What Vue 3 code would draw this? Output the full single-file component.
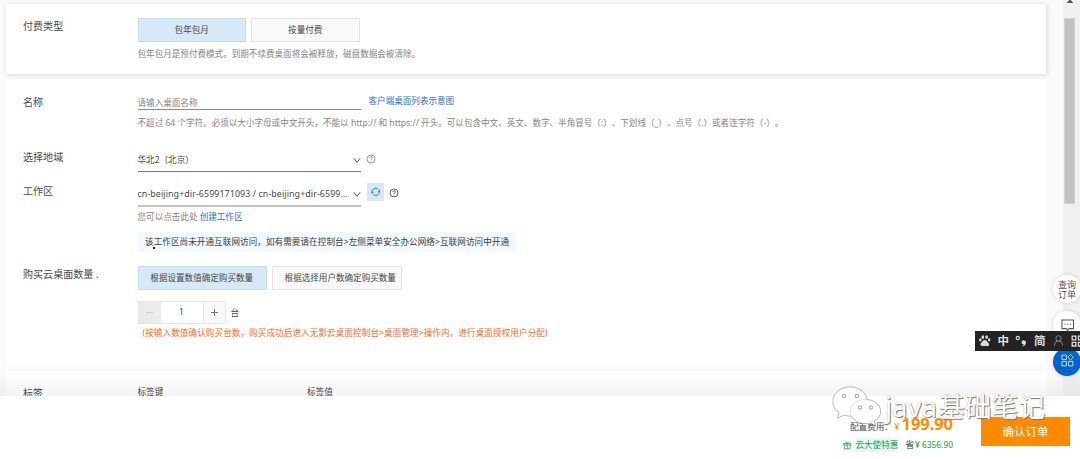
<script setup>
import { ref } from 'vue'

const payTypes = ['包年包月', '按量付费']
const payType = ref(0)
const quantityModes = ['根据设置数值确定购买数量', '根据选择用户数确定购买数量']
const quantityMode = ref(0)
const quantity = ref(1)
</script>

<template>
  <div class="page">
    <main class="content">
      <section class="card pay">
        <div class="label">付费类型</div>
        <div class="field">
          <div class="choices">
            <button v-for="(t, i) in payTypes" :key="t" class="choice" :class="{ active: payType === i }" @click="payType = i">{{ t }}</button>
          </div>
          <p class="hint pay-hint">包年包月是预付费模式。到期不续费桌面将会被释放，磁盘数据会被清除。</p>
        </div>
      </section>

      <section class="card config">
        <div class="row name-row">
          <div class="label">名称</div>
          <div class="field">
            <div class="line">
              <div class="input">请输入桌面名称</div>
              <a class="link">客户端桌面列表示意图</a>
            </div>
            <p class="hint rules">不超过 64 个字符。必须以大小字母或中文开头，不能以 http:// 和 https:// 开头。可以包含中文、英文、数字、半角冒号（:）、下划线（_）、点号（.）或者连字符（-）。</p>
          </div>
        </div>

        <div class="row region-row">
          <div class="label down">选择地域</div>
          <div class="field line">
            <div class="select"><span>华北2（北京）</span>
              <svg class="chevron" viewBox="0 0 9 7"><path d="M1 1l3.5 4.6L8 1" /></svg>
            </div>
            <svg class="help" viewBox="0 0 10 10"><circle cx="5" cy="5" r="4" /><path d="M3.7 4.1c0-1.8 2.7-1.7 2.7-.2 0 1-1.4 1-1.4 2M5 6.8v.8" /></svg>
          </div>
        </div>

        <div class="row zone-row">
          <div class="label">工作区</div>
          <div class="field">
            <div class="line">
              <div class="select busy"><span class="zone">cn-beijing+dir-6599171093 / cn-beijing+dir-6599...</span>
                <svg class="chevron" viewBox="0 0 9 7"><path d="M1 1l3.5 4.6L8 1" /></svg>
              </div>
              <button class="refresh">
                <svg viewBox="0 0 10 10"><path d="M1.3 6A3.8 3.8 0 0 1 7.4 2M2.6 8A3.8 3.8 0 0 0 8.7 4" /><path class="tip" d="M0 5.2h2.7L1.4 7.1zM7.3 4.8H10L8.6 2.9z" /></svg>
              </button>
              <svg class="help dark" viewBox="0 0 10 10"><circle cx="5" cy="5" r="4" /><path d="M3.7 4.1c0-1.8 2.7-1.7 2.7-.2 0 1-1.4 1-1.4 2M5 6.8v.8" /></svg>
            </div>
            <p class="hint zone-hint">您可以点击此处 <a>创建工作区</a></p>
            <p class="notice">该工作区尚未开通互联网访问，如有需要请在控制台&gt;左侧菜单安全办公网络&gt;互联网访问中开通</p>
          </div>
        </div>

        <div class="row">
          <div class="label">购买云桌面数量 .</div>
          <div class="field">
            <div class="choices wide">
              <button v-for="(m, i) in quantityModes" :key="m" class="choice" :class="{ active: quantityMode === i }" @click="quantityMode = i">{{ m }}</button>
            </div>
            <div class="amount">
              <div class="stepper">
                <button class="minus" @click="quantity = Math.max(1, quantity - 1)"></button>
                <span>{{ quantity }}</span>
                <button class="plus" @click="quantity++"></button>
              </div>
              <span class="unit">台</span>
            </div>
            <p class="warn">(按输入数值确认购买台数，购买成功后进入无影云桌面控制台&gt;桌面管理&gt;操作内，进行桌面授权用户分配)</p>
          </div>
        </div>
      </section>

      <section class="card tags">
        <div class="label down">标签</div>
        <div class="tag-cols"><span>标签键</span><span>标签值</span></div>
      </section>

      <div class="scrollbar">
        <svg class="arrow" viewBox="0 0 6 3"><path d="M2 0h2v1h1v1h1v1H0V2h1V1h1z" /></svg>
        <div class="thumb"></div>
      </div>
      <div class="fade"></div>
    </main>

    <footer class="footer">
      <div class="totals">
        <div class="cost"><span class="cost-label">配置费用：</span><span class="yen">¥</span><strong>199.90</strong></div>
        <div class="saving">
          <svg class="gift" viewBox="0 0 9 9"><path d="M.7 2.6h7.6v1.7H.7zM1.4 4.3v4h6.2v-4M4.5 2.6v5.7M4.5 2.5L2.7.6M4.5 2.5L6.3.6" /></svg>
          <span class="promo">云大使特惠</span><span class="save">省</span><span class="saved">¥ 6356.90</span>
        </div>
      </div>
      <button class="submit">确认订单</button>
    </footer>

    <div class="bubble orders"><span>查询</span><span>订单</span></div>
    <div class="bubble chat">
      <svg viewBox="0 0 14 13"><path d="M1 1h12v9H8.4L7 11.8 5.6 10H1zM3.7 5.500h1.200M6.400 5.500h1.200M9.100 5.500h1.200" /></svg>
    </div>
    <div class="bubble apps">
      <svg viewBox="0 0 14 14"><path d="M1 1.2h4.8v4.8H1zM1 8h4.8v4.8H1zM8 8h4.8v4.8H8zM10.3.5l3 3-3 3-3-3z" /></svg>
    </div>

    <div class="ime">
      <svg class="paw" viewBox="0 0 12 12"><ellipse cx="4" cy="2.2" rx="1.4" ry="2" /><ellipse cx="8" cy="2.2" rx="1.4" ry="2" /><ellipse cx="1.4" cy="5" rx="1.3" ry="1.7" /><ellipse cx="10.6" cy="5" rx="1.3" ry="1.7" /><path d="M6 5.1c2 0 2.5 1.9 3.8 3.2 1.7 1.8.2 3.6-1.6 3.3-1.5-.3-2.8-.3-4.4 0C2 11.9.5 10.1 2.2 8.3 3.5 7 4 5.1 6 5.1z" /></svg>
      <span>中</span>
      <svg class="punct" viewBox="0 0 12 12"><circle cx="2.8" cy="3" r="1.6" /><path class="solid" d="M9 5.500a1.900 1.900 0 1 0-.3 3.700c0 .8-.5 1.200-1.300 1.600l.4.8C10.200 10.800 11 9.200 11 7.600A2 2 0 0 0 9 5.500z" /></svg>
      <span>简</span>
      <svg class="person" viewBox="0 0 12 12"><circle cx="6" cy="3.700" r="2.800" /><path d="M1.500 12c0-3.500 1.700-5.300 4.500-5.300s4.500 1.800 4.500 5.300" /></svg>
      <svg class="grid" viewBox="0 0 12 12"><path d="M1.200 1.200h3.600v3.600H1.200zM7.400 1.200H11v3.600H7.400zM1.200 7.400h3.600V11H1.200zM7.400 7.400H11V11H7.400z" /></svg>
    </div>

    <div class="watermark">
      <svg viewBox="0 0 52 44">
        <path d="M19 2C9 2 2 8.500 2 16.500c0 4.700 2.400 8.600 6.300 11.200L6.500 33l6.300-3c2 .6 4 .9 6.200.9 10 0 17-6.400 17-14.400S29 2 19 2z" />
        <path d="M34.500 14.500c-8.500 0-15 5.400-15 12s6.500 12 15 12c1.700 0 3.400-.2 5-.7l5.200 2.700-1.500-4.400c3.700-2.100 6.300-5.500 6.300-9.600 0-6.600-6.500-12-15-12z" />
        <g class="eyes"><circle cx="13" cy="11" r="1.900" /><circle cx="26" cy="11" r="1.900" /><circle cx="29" cy="22.500" r="1.700" /><circle cx="40" cy="22.500" r="1.700" /></g>
      </svg>
      <span class="latin">java</span><span class="han">基础笔记</span>
    </div>
    <div class="pointer"></div>
  </div>
</template>

<style>
body { margin: 0; overflow: hidden; }
</style>

<style scoped>
* { box-sizing: border-box; }
.page { position: relative; width: 1080px; height: 459px; overflow: hidden; background: #fff; color: #4a4a4a; font: 8.57px/12px "Noto Sans", "Noto Sans CJK SC", sans-serif; }
button { font: inherit; color: inherit; padding: 0; border: 0; background: none; }
p { margin: 0; white-space: nowrap; }
svg { display: block; fill: none; stroke: currentColor; flex: none; overflow: visible; }
.content { position: relative; height: 396px; overflow: hidden; background: #fafafa; padding: 4px 0 0 6px; }
.card { width: 1040px; background: #fff; padding-left: 17px; }
.label { width: 114.5px; flex: none; font-size: 10.05px; line-height: 14px; white-space: nowrap; color: #4a4a4a; }
.label.down { padding-top: 1px; }
.pay { display: flex; height: 70px; padding-top: 14px; box-shadow: 1px 1px 5px rgba(0, 0, 0, .15); }
.pay .label { padding-top: 1px; }
.choices { display: flex; gap: 5px; }
.choice { width: 108.5px; height: 23.5px; border: 1px solid #e5e5e5; background: #f9f9f9; line-height: 22px; white-space: nowrap; }
.choice.active { background: #d7e9f6; border-color: #c2def3; }
.choices.wide .choice { width: 129.5px; border-radius: 1px; padding-right: 1px; }
.choices.wide .choice:last-child { padding: 0 0 0 7px; }
.hint { color: #858585; }
.pay-hint { padding-top: 6px; }
.config { height: 285px; margin-top: 6px; padding-top: 15px; }
.row { display: flex; }
.line { display: flex; }
.name-row { height: 54px; }
.input { width: 223.500px; height: 14.500px; padding-top: 2px; border-bottom: 1px solid #888; color: #858585; }
.link { margin-left: 7.500px; color: #1a75cc; }
.rules { padding-top: 7.500px; text-spacing-trim: space-all; }
.region-row { height: 35px; }
.region-row .select { height: 22.5px; padding-top: 4.5px; }
.select { display: flex; justify-content: space-between; width: 223.500px; border-bottom: 1px solid #777; white-space: nowrap; }
.chevron { width: 8px; height: 7px; margin: 3px .5px 0 0; color: #555; stroke-width: 1.1; }
.help { width: 10px; height: 10px; margin: 5px 0 0 5px; color: #808080; stroke-width: .8; }
.help.dark { margin: 4px 0 0 5px; color: #444; }
.zone-row { height: 82px; }
.busy { height: 22.5px; padding-top: 4px; border-bottom: 2px solid #c2c2c2; }
.zone { font-size: 8.9px; letter-spacing: .075px; }
.refresh { display: grid; place-items: center; width: 17px; height: 18px; margin: -1px 0 0 6px; background: #d7e9f6; color: #1a75cc; }
.refresh svg { width: 9.5px; height: 9.5px; stroke-width: 1; }
.tip { fill: currentColor; stroke: none; }
.zone-hint { padding-top: 4.5px; }
.zone-hint a { color: #1a75cc; }
.notice { display: inline-block; height: 20px; width: 378.5px; margin-top: 9px; padding-left: 7.5px; background: #f1f8fe; color: #3d3d3d; line-height: 20px; letter-spacing: .075px; }
.row:last-child .label { padding-top: 1px; }
.amount { display: flex; margin-top: 11px; }
.stepper { display: grid; grid-template-columns: 22px 42px 22px; width: 88px; height: 23px; border: 1px solid #e5e5e5; grid-template-rows: 21px; }
.stepper span { text-align: center; line-height: 21px; }
.minus, .plus { position: relative; background: #f9f9f9; }
.plus { border-left: 1px solid #e5e5e5; }
.minus { background: #ebebeb; }
.minus::before, .plus::before, .plus::after { content: ""; position: absolute; left: 7px; top: 10px; width: 7px; height: 1px; background: #777; }
.minus::before { background: #ccc; }
.plus::after { transform: rotate(90deg); }
.unit { margin: 6px 0 0 5px; }
.warn { padding: 3px 0 0 5px; color: #ff6a28; letter-spacing: .1px; }
.tags { display: flex; height: 60px; margin-top: 6px; padding-top: 14px; }
.tag-cols { display: grid; grid-template-columns: 169.5px 60px; padding-top: 1px; }
.scrollbar { position: absolute; top: 0; right: 0; width: 17px; height: 396px; background: #f0f0f0; }
.arrow { position: absolute; left: 3.5px; top: 0; width: 6px; height: 3px; fill: #555; stroke: none; }
.thumb { position: absolute; left: 1px; top: 18px; width: 10.5px; height: 186px; background: #c1c1c1; border: 1px solid #d0d0d0; }
.fade { position: absolute; left: 0; right: 0; bottom: 0; height: 26px; background: linear-gradient(rgba(0, 0, 0, 0), rgba(0, 0, 0, .045)); }
.footer { display: flex; justify-content: flex-end; height: 63px; padding-right: 10px; background: #fff; }
.totals { width: 125px; margin-right: 28px; padding-top: 18px; }
.cost { display: flex; justify-content: flex-end; height: 21px; align-items: baseline; line-height: 20px; white-space: nowrap; }
.cost-label { margin-right: 1.500px; }
.yen { margin-right: 2px; color: #ff8a00; font-size: 9px; }
.cost strong { color: #ff8a00; font-size: 16.400px; }
.saving { display: flex; justify-content: flex-end; height: 15px; margin-top: 3px; line-height: 14px; color: #259b4b; white-space: nowrap; }
.gift { width: 8.5px; height: 8.5px; margin: 2.5px 3px 0 0; stroke-width: .8; }
.promo { width: 43.500px; height: 14px; padding-left: .5px; background: #e9f9ef; }
.save { margin-left: 7px; color: #333; }
.saved { margin-left: 1px; font-size: 8.4px; }
.submit { width: 89px; height: 29px; margin-top: 21px; background: #ff8a00; color: #fff; font-size: 11.5px; }
.bubble { position: absolute; left: 1053px; width: 28px; height: 28px; border-radius: 50%; background: #fff; box-shadow: 0 0 4px rgba(0, 0, 0, .14); color: #555; }
.orders { top: 275px; display: flex; flex-direction: column; align-items: center; padding-top: 5px; font-size: 9px; line-height: 9.7px; }
.chat { top: 311px; }
.chat svg { width: 13.5px; height: 12.5px; margin: 8px 0 0 7.5px; stroke-width: 1.1; }
.apps { top: 347.5px; background: #0064c8; color: #fff; }
.apps svg { width: 13px; height: 13px; margin: 6px 0 0 7.5px; stroke-width: .8; }
.ime { position: absolute; left: 975px; top: 331px; width: 105px; height: 19.5px; background: #232323; color: #ddd; display: flex; align-items: center; padding-left: 4px; font-size: 11.5px; line-height: 19px; font-weight: 700; overflow: hidden; }
.ime span { width: 11.5px; flex: none; }
.paw { width: 11.5px; height: 11.5px; fill: currentColor; stroke: none; margin-right: 7px; }
.punct { width: 12px; height: 12px; margin: 0 7px 0 6px; stroke-width: 1.1; }
.solid { fill: currentColor; stroke: none; }
.person { width: 11px; height: 11px; margin: 0 7px; color: #777; stroke-width: 1.1; }
.grid { width: 12px; height: 12px; stroke-width: 1.3; }
.watermark { position: absolute; left: 831px; top: 385px; display: flex; color: #fff; white-space: nowrap; line-height: 44px; text-shadow: 1px 1px 1px #777, 0 0 1px #999; }
.watermark svg { width: 52px; height: 44px; fill: #fff; stroke: #bbb; stroke-width: .5; filter: drop-shadow(.8px .8px .5px #666); }
.watermark .eyes { stroke: #888; stroke-width: .8; }
.latin { font-size: 27.500px; width: 55px; padding-left: 2px; }
.han { font-size: 26.8px; }
.pointer { position: absolute; left: 153px; top: 247px; width: 2px; height: 1.500px; background: #222; }
</style>
